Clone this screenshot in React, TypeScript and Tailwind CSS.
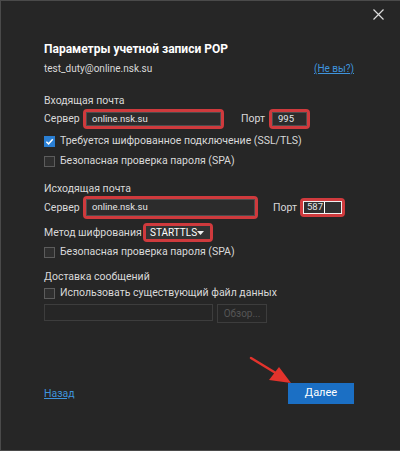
import React from 'react';

const font = { fontFamily: 'Roboto, "Noto Sans", sans-serif' };

const RedBox: React.FC<{ className?: string; children: React.ReactNode }> = ({ className = '', children }) => (
  <div className={`border-[3px] border-[#cf3a3d] rounded-[4px] flex shrink-0 ${className}`}>{children}</div>
);

const Check: React.FC<{ checked?: boolean }> = ({ checked }) =>
  checked ? (
    <div className="w-[11px] h-[11px] bg-[#2a7fd4] flex items-center justify-center shrink-0">
      <svg width="9" height="9" viewBox="0 0 10 10">
        <path d="M1.5 5.2 L4 7.6 L8.6 2.4" stroke="#fff" strokeWidth="1.6" fill="none" />
      </svg>
    </div>
  ) : (
    <div className="w-[11px] h-[11px] border border-[#5c5c5c] bg-[#2f2f2f] shrink-0" />
  );

export default function App() {
  return (
    <div
      className="relative w-[400px] h-[451px] bg-[#262626] border-t border-l border-b border-[#4a4a4a] text-[#d9d9d9] text-[10.5px] whitespace-nowrap overflow-hidden"
      style={font}
    >
      {/* close */}
      <div className="h-[26px] flex items-center justify-end pr-[16px]">
        <svg width="11" height="11" viewBox="0 0 11 11">
          <path d="M0.5 0.5 L10.5 10.5 M10.5 0.5 L0.5 10.5" stroke="#dcdcdc" strokeWidth="1.2" />
        </svg>
      </div>

      <div className="pl-[43px] pr-[46px]">
        <div className="mt-[12px] h-[20px] flex items-center text-[12px] font-bold text-white">
          Параметры учетной записи POP
        </div>
        <div className="mt-[1px] h-[16px] flex items-center justify-between text-[10px]">
          <span>test_duty@online.nsk.su</span>
          <span className="text-[#3f93dc] underline">(Не вы?)</span>
        </div>

        {/* incoming */}
        <div className="mt-[17px] h-[16px] flex items-center">Входящая почта</div>
        <div className="h-[20px] flex items-center">
          <span className="w-[39px]">Сервер</span>
          <RedBox className="w-[141px] h-[20px]">
            <div className="flex-1 bg-[#2c2c2c] border border-[#4d4d4d] flex items-center pl-[5px] text-[9.5px] text-[#e6e6e6]">
              online.nsk.su
            </div>
          </RedBox>
          <span className="ml-[17px] w-[25px]">Порт</span>
          <RedBox className="ml-[3px] w-[41px] h-[20px]">
            <div className="flex-1 bg-[#2c2c2c] border border-[#4d4d4d] flex items-center pl-[5px] text-[9.5px] text-[#e6e6e6]">
              995
            </div>
          </RedBox>
        </div>
        <div className="mt-[4px] h-[16px] flex items-center gap-[5px]">
          <Check checked />
          <span>Требуется шифрованное подключение (SSL/TLS)</span>
        </div>
        <div className="mt-[4px] h-[16px] flex items-center gap-[5px]">
          <Check />
          <span>Безопасная проверка пароля (SPA)</span>
        </div>

        {/* outgoing */}
        <div className="mt-[13px] h-[14px] flex items-center">Исходящая почта</div>
        <div className="h-[23px] flex items-center">
          <span className="w-[39px]">Сервер</span>
          <RedBox className="w-[175px] h-[23px]">
            <div className="flex-1 bg-[#2c2c2c] border border-[#4d4d4d] flex items-center pl-[5px] text-[9.5px] text-[#e6e6e6]">
              online.nsk.su
            </div>
          </RedBox>
          <span className="ml-[15px] w-[25px]">Порт</span>
          <RedBox className="ml-[2px] w-[45px] h-[19px]">
            <div className="flex-1 bg-[#303030] border border-[#f0f0f0] flex items-center pl-[3px] text-[9.5px] text-[#e6e6e6]">
              587<span className="ml-[1px] w-px h-[11px] bg-white" />
            </div>
          </RedBox>
        </div>
        <div className="mt-[4px] h-[19px] flex items-center">
          <span className="w-[99px]">Метод шифрования</span>
          <RedBox className="w-[70px] h-[19px]">
            <div className="flex-1 bg-[#333333] flex items-center justify-between pl-[4px] pr-[6px] text-[10px] text-white">
              <span>STARTTLS</span>
              <svg width="7" height="4" viewBox="0 0 7 4">
                <path d="M0 0 L7 0 L3.5 4 Z" fill="#f0f0f0" />
              </svg>
            </div>
          </RedBox>
        </div>
        <div className="mt-[2px] h-[16px] flex items-center gap-[5px]">
          <Check />
          <span>Безопасная проверка пароля (SPA)</span>
        </div>

        {/* delivery */}
        <div className="mt-[9px] h-[16px] flex items-center">Доставка сообщений</div>
        <div className="h-[16px] flex items-center gap-[5px]">
          <Check />
          <span>Использовать существующий файл данных</span>
        </div>
        <div className="mt-[2px] h-[20px] flex items-start">
          <div className="mt-[1px] w-[169px] h-[17px] border border-[#3d3d3d]" />
          <div className="ml-[4px] mt-[1px] w-[50px] h-[19px] border border-[#3d3d3d] flex items-center justify-center text-[10px] text-[#555555]">
            Обзор...
          </div>
        </div>

        {/* footer */}
        <div className="mt-[60px] h-[21px] flex items-center justify-between">
          <span className="text-[#3f93dc] underline">Назад</span>
          <div className="w-[66px] h-[21px] bg-[#1b6fc4] flex items-center justify-center text-white text-[11px]">
            Далее
          </div>
        </div>
      </div>

      {/* annotation arrow */}
      <svg className="absolute left-0 top-0 pointer-events-none" width="400" height="451">
        <line x1="250" y1="357" x2="278" y2="374" stroke="#e3332c" strokeWidth="2.5" strokeLinecap="round" />
        <path d="M290 382 L268 379 L278 366 Z" fill="#e3332c" />
      </svg>
    </div>
  );
}
